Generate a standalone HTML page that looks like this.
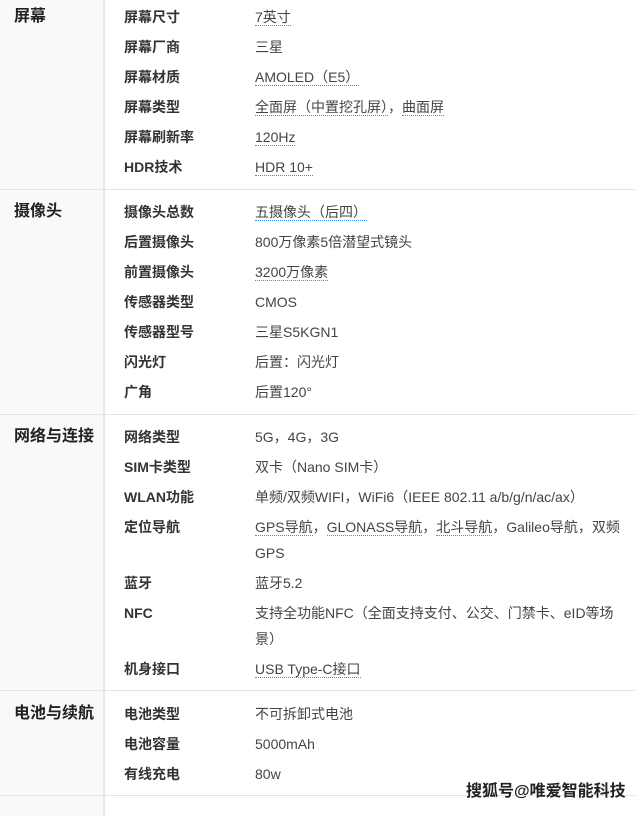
<!DOCTYPE html>
<html><head><meta charset="utf-8"><style>
body{margin:0;width:635px;height:806px;overflow:hidden;background:#fff;font-family:"Liberation Sans","Noto Sans CJK SC",sans-serif;color:#333;}
.sec{position:absolute;left:0;width:635px;border-bottom:1px solid #e4e4e4;}
.cat{position:absolute;left:0;top:0;bottom:0;width:103px;background:#f9f9f9;border-right:2px solid #e8e8e8;}
.cat b{position:absolute;left:14px;font-size:16px;font-weight:bold;line-height:26px;color:#222;}
.row{position:absolute;left:124px;width:500px;font-size:14px;line-height:26px;}
.row .k{position:absolute;left:0;font-weight:bold;color:#333;}
.row .v{position:absolute;left:131px;width:370px;color:#444;}
a{color:#444;text-decoration:none;border-bottom:1px dotted #3a8ee6;border-bottom-color:#3a8ee6;}
.wm{position:absolute;left:466px;top:777px;font-size:16px;font-weight:bold;color:#222;text-shadow:0 0 2px #fff,0 0 2px #fff;}
</style></head><body>

<div class="sec" style="top:-5px;height:194px">
<div class="cat"><b style="top:9px">屏幕</b></div>
<div class="row" style="top:9px"><span class="k">屏幕尺寸</span><span class="v"><a>7英寸</a></span></div>
<div class="row" style="top:39px"><span class="k">屏幕厂商</span><span class="v">三星</span></div>
<div class="row" style="top:69px"><span class="k">屏幕材质</span><span class="v"><a>AMOLED（E5）</a></span></div>
<div class="row" style="top:99px"><span class="k">屏幕类型</span><span class="v"><a>全面屏（中置挖孔屏）</a>，<a>曲面屏</a></span></div>
<div class="row" style="top:129px"><span class="k">屏幕刷新率</span><span class="v"><a>120Hz</a></span></div>
<div class="row" style="top:159px"><span class="k">HDR技术</span><span class="v"><a>HDR 10+</a></span></div>
</div>

<div class="sec" style="top:190px;height:224px">
<div class="cat"><b style="top:9px">摄像头</b></div>
<div class="row" style="top:9px"><span class="k">摄像头总数</span><span class="v"><a>五摄像头（后四）</a></span></div>
<div class="row" style="top:39px"><span class="k">后置摄像头</span><span class="v">800万像素5倍潜望式镜头</span></div>
<div class="row" style="top:69px"><span class="k">前置摄像头</span><span class="v"><a>3200万像素</a></span></div>
<div class="row" style="top:99px"><span class="k">传感器类型</span><span class="v">CMOS</span></div>
<div class="row" style="top:129px"><span class="k">传感器型号</span><span class="v">三星S5KGN1</span></div>
<div class="row" style="top:159px"><span class="k">闪光灯</span><span class="v">后置：闪光灯</span></div>
<div class="row" style="top:189px"><span class="k">广角</span><span class="v">后置120°</span></div>
</div>

<div class="sec" style="top:415px;height:275px">
<div class="cat"><b style="top:9px">网络与连接</b></div>
<div class="row" style="top:9px"><span class="k">网络类型</span><span class="v">5G，4G，3G</span></div>
<div class="row" style="top:39px"><span class="k">SIM卡类型</span><span class="v">双卡（Nano SIM卡）</span></div>
<div class="row" style="top:69px"><span class="k">WLAN功能</span><span class="v">单频/双频WIFI，WiFi6（IEEE 802.11 a/b/g/n/ac/ax）</span></div>
<div class="row" style="top:99px"><span class="k">定位导航</span><span class="v"><a>GPS导航</a>，<a>GLONASS导航</a>，<a>北斗导航</a>，Galileo导航，双频<br>GPS</span></div>
<div class="row" style="top:155px"><span class="k">蓝牙</span><span class="v">蓝牙5.2</span></div>
<div class="row" style="top:185px"><span class="k">NFC</span><span class="v">支持全功能NFC（全面支持支付、公交、门禁卡、eID等场<br>景）</span></div>
<div class="row" style="top:241px"><span class="k">机身接口</span><span class="v"><a>USB Type-C接口</a></span></div>
</div>

<div class="sec" style="top:691px;height:104px">
<div class="cat"><b style="top:10px">电池与续航</b></div>
<div class="row" style="top:10px"><span class="k">电池类型</span><span class="v">不可拆卸式电池</span></div>
<div class="row" style="top:40px"><span class="k">电池容量</span><span class="v">5000mAh</span></div>
<div class="row" style="top:70px"><span class="k">有线充电</span><span class="v">80w</span></div>
</div>
<div class="sec" style="top:796px;height:20px;border:none"><div class="cat"></div></div>
<div class="wm">搜狐号@唯爱智能科技</div>
</body></html>
